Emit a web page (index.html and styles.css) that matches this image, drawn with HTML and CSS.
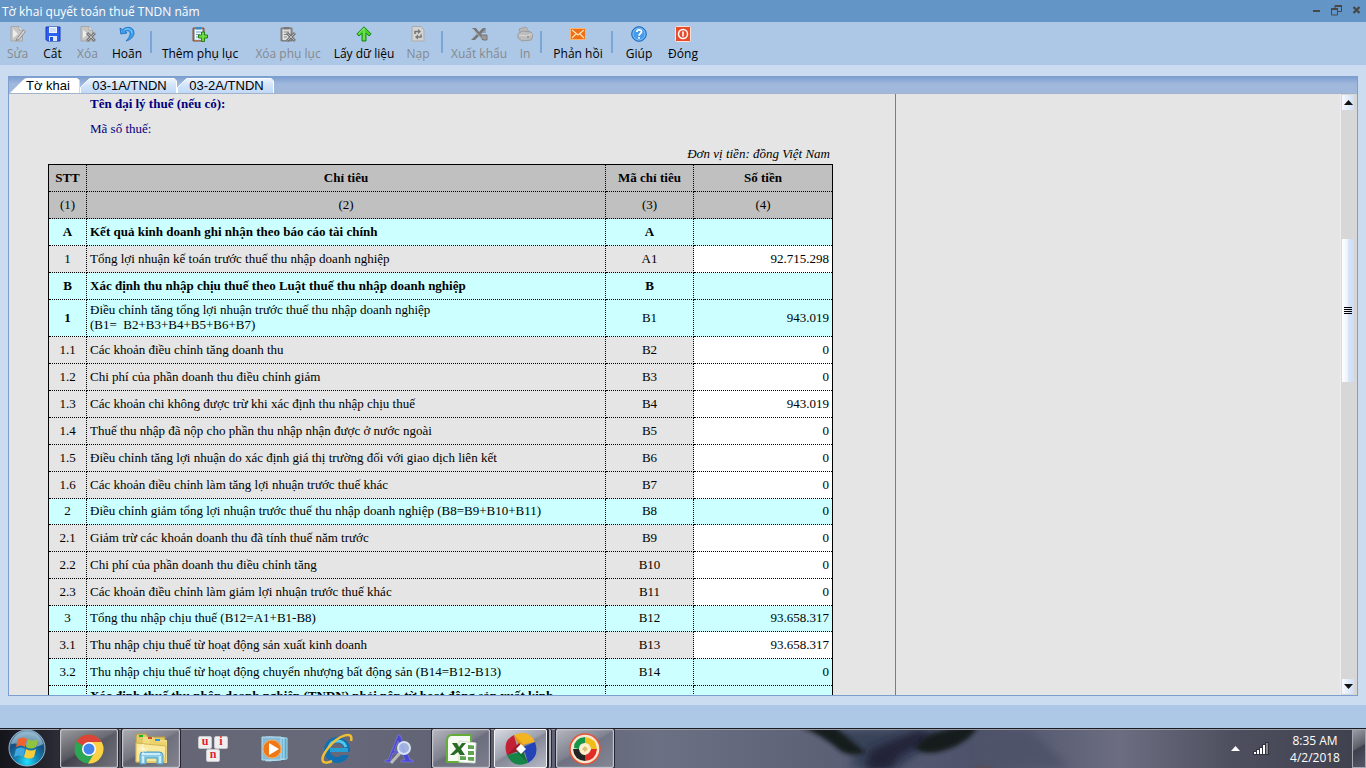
FILE: index.html
```html
<!DOCTYPE html>
<html lang="vi">
<head>
<meta charset="utf-8">
<meta name="viewport" content="width=device-width, initial-scale=1">
<title>Tờ khai quyết toán thuế TNDN năm</title>
<link rel="stylesheet" href="styles.css">
</head>
<body>
<header class="titlebar">
  <h1 class="title">Tờ khai quyết toán thuế TNDN năm</h1>
  <div class="window-controls">
    <button class="win-btn" aria-label="Thu nhỏ"><svg width="11" height="11" viewBox="0 0 11 11"><path d="M2 5h7v2H2z" fill="#484848"/></svg></button>
    <button class="win-btn" aria-label="Khôi phục"><svg width="11" height="11" viewBox="0 0 11 11"><path d="M4 3V.5h6.500v6H7M.5 4h6v6h-6z" fill="none" stroke="#484848"/><path d="M4 0h7v2H4zM0 3h7v2H0z" fill="#484848"/></svg></button>
    <button class="win-btn" aria-label="Đóng cửa sổ"><svg width="11" height="11" viewBox="0 0 11 11"><path d="M2.500 2l6 6M8.500 2l-6 6" stroke="#484848" stroke-width="2.400"/></svg></button>
  </div>
</header>

<nav class="toolbar" aria-label="Thanh công cụ">
  <button class="tool tool-s" disabled><svg width="16" height="16" viewBox="0 0 16 16"><path d="M1 .5h8L12.500 4v11H1z" fill="#c6c6c6" stroke="#a5a5a5"/><path d="M9 .5V4h3.500" fill="#eee" stroke="#aaa"/><path d="M3 3l5 5-5 4z" fill="#eee"/><path d="M7 12.500L13.500 4 15.500 5.500 9 13.500l-3 1z" fill="#d8d8d8" stroke="#8c8c8c"/></svg>Sửa</button>
  <button class="tool tool-s"><svg width="16" height="16" viewBox="0 0 16 16"><path d="M1 1h14v14H2.500L1 13.500z" fill="#2e60ef" stroke="#1838b8"/><path d="M4 1h8v6H4z" fill="#edf3ff"/><path d="M5 3h6M5 5h6" stroke="#b5c6ec"/><path d="M4 10h8v5H4z" fill="#dbe6ff"/><path d="M5 11h3v4H5z" fill="#244fd5"/></svg>Cất</button>
  <button class="tool tool-s" disabled><svg width="16" height="16" viewBox="0 0 16 16"><path d="M1 .5h8L12.500 4v11H1z" fill="#c6c6c6" stroke="#a5a5a5"/><path d="M9 .5V4h3.500" fill="#eee" stroke="#aaa"/><path d="M3 4l5 4-5 4z" fill="#eee"/><path d="M7 7l8 8M15 7l-8 8" stroke="#777" stroke-width="3"/><path d="M7.500 7.500l7 7M14.500 7.500l-7 7" stroke="#bbb"/></svg>Xóa</button>
  <button class="tool tool-m"><svg width="16" height="16" viewBox="0 0 16 16"><path d="M1 2l.8 6L8 7 6 5.500C9 3.800 11.500 5 11 8.500c-.3 2.300-1.800 4-4 6.500 4.500-1 8-4.500 8-8C15 1.500 8.500-.8 3.500 3.700z" fill="#3b9ff0" stroke="#1769b7" stroke-width=".8"/><path d="M5.500 4C9 1.500 13 3.500 13 7.500" fill="none" stroke="#8dd2ff"/></svg>Hoãn</button>
  <span class="separator"></span>
  <button class="tool tool-xl"><svg width="16" height="16" viewBox="0 0 16 16"><path d="M1 2h11v13H1z" fill="#bd6b24" stroke="#8a512d"/><path d="M2.500 3h8v11h-8z" fill="#f5faff" stroke="#8fb2d2" stroke-width=".6"/><path d="M3.500 1h6v2.500h-6z" fill="#398ac0"/><path d="M4 6h5M4 8.500h4M4 11h3" stroke="#689cc2"/><path d="M9.500 6h3v3h3v3h-3v3.500h-3V12h-3V9h3z" fill="#6fda3e" stroke="#218219"/></svg>Thêm phụ lục</button>
  <button class="tool tool-xl" disabled><svg width="16" height="16" viewBox="0 0 16 16"><path d="M1 2h11v13H1z" fill="#888" stroke="#7a7a7a"/><path d="M2.500 3h8v11h-8z" fill="#dedede"/><path d="M3.500 1h6v2.500h-6z" fill="#777"/><path d="M4 6h5M4 8.500h4M4 11h3" stroke="#888"/><path d="M7 7l8 8M15 7l-8 8" stroke="#737373" stroke-width="3"/><path d="M7.500 7.500l7 7M14.500 7.500l-7 7" stroke="#bbb"/></svg>Xóa phụ lục</button>
  <button class="tool tool-l"><svg width="16" height="16" viewBox="0 0 16 16"><path d="M8 .8L15.200 8 13 10 10 7.300V15H6V7.300L3 10 .8 8z" fill="#43cf25" stroke="#168a1d"/><path d="M8 2v12M7.500 2.500L2.500 8" stroke="#9bed77"/></svg>Lấy dữ liệu</button>
  <button class="tool tool-m" disabled><svg width="16" height="16" viewBox="0 0 16 16"><path d="M2 .5h9L14 4v11H2z" fill="#d3d3d3" stroke="#aaa"/><path d="M5 8V5.500h4M11 8.500V11H7" fill="none" stroke="#777" stroke-width="1.600"/><path d="M8 3l3 2.500L8 8zM8 8.500v5L5 11z" fill="#777"/></svg>Nạp</button>
  <span class="separator"></span>
  <button class="tool tool-l" disabled><svg width="18" height="16" viewBox="0 0 18 16"><path d="M2 2h4l3 4 4-4h3l-5 6 5 6h-4l-3-4-4 4H1l6-6z" fill="#777"/><path d="M10 9h7v5h-4zM11 4h5M12 6h4" fill="#999" stroke="#777"/><path d="M3 3l9 10" stroke="#b5b5b5"/></svg>Xuất khẩu</button>
  <button class="tool tool-xs" disabled><svg width="16" height="16" viewBox="0 0 16 16"><path d="M2 3l7-2 3 5-8 3z" fill="#bbb" stroke="#a0a0a0"/><path d="M1 8l4-3 9 1 2 4-2 4-9 1-4-3z" fill="#bdbdbd" stroke="#999"/><path d="M2 9l8 1 5-2" fill="none" stroke="#d9d9d9"/><circle cx="11" cy="11" r="1" fill="#888"/></svg>In</button>
  <span class="separator"></span>
  <button class="tool tool-l"><svg width="16" height="16" viewBox="0 0 16 16"><path d="M.5 2.500h15v11H.5z" fill="#ed7114" stroke="#fbb475"/><path d="M2 4l6 5 6-5M2 12l4-4M14 12l-4-4" fill="none" stroke="#ffe1be" stroke-width="1.200"/></svg>Phản hồi</button>
  <span class="separator"></span>
  <button class="tool tool-m"><svg width="16" height="16" viewBox="0 0 16 16"><circle cx="8" cy="8" r="7.300" fill="#469bec" stroke="#1765b4"/><circle cx="8" cy="8" r="6" fill="none" stroke="#a2d5ff" stroke-width=".6"/><path d="M5.800 6c0-3 4.700-2.800 4.700-.2C10.500 7.500 8 7.500 8 9.700M8 11v1.800" fill="none" stroke="#fff" stroke-width="1.700"/></svg>Giúp</button>
  <button class="tool tool-m"><svg width="16" height="16" viewBox="0 0 16 16"><rect x=".5" y=".5" width="15" height="15" rx="1" fill="#e54c2b" stroke="#ffe1d9"/><circle cx="8" cy="8" r="4.500" fill="none" stroke="#fff" stroke-width="1.500"/><path d="M8 5.500v5" stroke="#fff" stroke-width="1.600"/></svg>Đóng</button>
</nav>

<main class="workspace">
  <section class="panel">
    <div class="tabs" role="tablist">
      <button class="tab tab-first" role="tab" aria-selected="true"><svg class="tab-shape" viewBox="0 0 70 16" preserveAspectRatio="none"><path d="M0 16L13 2Q15 0 17 0H67L69.500 2V16z" fill="#fff"/></svg><span>Tờ khai</span></button>
      <button class="tab" role="tab" aria-selected="false"><svg class="tab-shape" viewBox="0 0 97 16" preserveAspectRatio="none"><defs><linearGradient id="tabfill" x2="0" y2="1"><stop stop-color="#eff6ff"/><stop offset=".45" stop-color="#d3e4fa"/><stop offset="1" stop-color="#c1d9f6"/></linearGradient></defs><path d="M.5 16V10L8 2Q9 .5 11 .5H94L96.500 3V16" fill="url(#tabfill)" stroke="#fff"/></svg><span>03-1A/TNDN</span></button>
      <button class="tab" role="tab" aria-selected="false"><svg class="tab-shape" viewBox="0 0 97 16" preserveAspectRatio="none"><path d="M.5 16V10L8 2Q9 .5 11 .5H94L96.500 3V16" fill="url(#tabfill)" stroke="#fff"/></svg><span>03-2A/TNDN</span></button>
    </div>
    <div class="document">
      <div class="page">
        <div class="sheet">
          <p class="agent">Tên đại lý thuế (nếu có):</p>
          <p class="taxcode">Mã số thuế:</p>
          <p class="unit">Đơn vị tiền: đồng Việt Nam</p>
          <table class="form">
            <colgroup><col class="c-no"><col><col class="c-code"><col class="c-amount"></colgroup>
            <thead>
              <tr><th>STT</th><th>Chỉ tiêu</th><th>Mã chỉ tiêu</th><th>Số tiền</th></tr>
              <tr><td>(1)</td><td>(2)</td><td>(3)</td><td>(4)</td></tr>
            </thead>
            <tbody>
              <tr class="total bold"><td>A</td><td>Kết quả kinh doanh ghi nhận theo báo cáo tài chính</td><td>A</td><td></td></tr>
              <tr><td>1</td><td>Tổng lợi nhuận kế toán trước thuế thu nhập doanh nghiệp</td><td>A1</td><td class="entry"><input aria-label="A1" value="92.715.298"></td></tr>
              <tr class="total bold"><td>B</td><td>Xác định thu nhập chịu thuế theo Luật thuế thu nhập doanh nghiệp</td><td>B</td><td></td></tr>
              <tr class="total double"><td><b>1</b></td><td>Điều chỉnh tăng tổng lợi nhuận trước thuế thu nhập doanh nghiệp<br>(B1=&nbsp; B2+B3+B4+B5+B6+B7)</td><td>B1</td><td>943.019</td></tr>
              <tr><td>1.1</td><td>Các khoản điều chỉnh tăng doanh thu</td><td>B2</td><td class="entry"><input aria-label="B2" value="0"></td></tr>
              <tr><td>1.2</td><td>Chi phí của phần doanh thu điều chỉnh giảm</td><td>B3</td><td class="entry"><input aria-label="B3" value="0"></td></tr>
              <tr><td>1.3</td><td>Các khoản chi không được trừ khi xác định thu nhập chịu thuế</td><td>B4</td><td class="entry"><input aria-label="B4" value="943.019"></td></tr>
              <tr><td>1.4</td><td>Thuế thu nhập đã nộp cho phần thu nhập nhận được ở nước ngoài</td><td>B5</td><td class="entry"><input aria-label="B5" value="0"></td></tr>
              <tr><td>1.5</td><td>Điều chỉnh tăng lợi nhuận do xác định giá thị trường đối với giao dịch liên kết</td><td>B6</td><td class="entry"><input aria-label="B6" value="0"></td></tr>
              <tr><td>1.6</td><td>Các khoản điều chỉnh làm tăng lợi nhuận trước thuế khác</td><td>B7</td><td class="entry"><input aria-label="B7" value="0"></td></tr>
              <tr class="total short"><td>2</td><td>Điều chỉnh giảm tổng lợi nhuận trước thuế thu nhập doanh nghiệp (B8=B9+B10+B11)</td><td>B8</td><td>0</td></tr>
              <tr><td>2.1</td><td>Giảm trừ các khoản doanh thu đã tính thuế năm trước</td><td>B9</td><td class="entry"><input aria-label="B9" value="0"></td></tr>
              <tr><td>2.2</td><td>Chi phí của phần doanh thu điều chỉnh tăng</td><td>B10</td><td class="entry"><input aria-label="B10" value="0"></td></tr>
              <tr><td>2.3</td><td>Các khoản điều chỉnh làm giảm lợi nhuận trước thuế khác</td><td>B11</td><td class="entry"><input aria-label="B11" value="0"></td></tr>
              <tr class="total short"><td>3</td><td>Tổng thu nhập chịu thuế (B12=A1+B1-B8)</td><td>B12</td><td>93.658.317</td></tr>
              <tr><td>3.1</td><td>Thu nhập chịu thuế từ hoạt động sản xuất kinh doanh</td><td>B13</td><td class="entry"><input aria-label="B13" value="93.658.317"></td></tr>
              <tr class="total"><td>3.2</td><td>Thu nhập chịu thuế từ hoạt động chuyển nhượng bất động sản (B14=B12-B13)</td><td>B14</td><td>0</td></tr>
              <tr class="total bold double"><td></td><td>Xác định thuế thu nhập doanh nghiệp (TNDN) phải nộp từ hoạt động sản xuất kinh<br>doanh</td><td></td><td></td></tr>
            </tbody>
          </table>
        </div>
      </div>
      <div class="scrollbar">
        <button class="scroll-btn" aria-label="Cuộn lên"><svg width="9" height="5" viewBox="0 0 9 5"><path d="M4.500 0L9 5H0z" fill="#111"/></svg></button>
        <div class="track"><div class="space-above"></div><div class="thumb"><i></i><i></i><i></i><i></i></div><div class="space-below"></div></div>
        <button class="scroll-btn" aria-label="Cuộn xuống"><svg width="9" height="5" viewBox="0 0 9 5"><path d="M0 0h9L4.500 5z" fill="#111"/></svg></button>
      </div>
    </div>
  </section>
</main>
<div class="statusbar"></div>

<footer class="taskbar">
  <svg class="wallpaper" viewBox="0 0 1366 38" preserveAspectRatio="none" aria-hidden="true">
    <defs><linearGradient id="wall"><stop stop-color="#15161c"/><stop offset=".035" stop-color="#25262f"/><stop offset=".08" stop-color="#4b4c57"/><stop offset=".13" stop-color="#656675"/><stop offset=".25" stop-color="#67697a"/><stop offset=".38" stop-color="#5c5f70"/><stop offset=".48" stop-color="#6c7083"/><stop offset=".58" stop-color="#606479"/><stop offset=".72" stop-color="#4c526a"/><stop offset=".82" stop-color="#6c6d81"/><stop offset=".9" stop-color="#4f505f"/><stop offset="1" stop-color="#3e404e"/></linearGradient><filter id="soft" x="-20%" y="-50%" width="140%" height="200%"><feGaussianBlur stdDeviation="4"/></filter><filter id="edge" x="-20%" y="-50%" width="140%" height="200%"><feGaussianBlur stdDeviation="2"/></filter></defs>
    <path d="M0 0h1366v38H0z" fill="url(#wall)"/>
    <path d="M825 0H950L920 22 900 38H850L855 22z" fill="#394359" filter="url(#soft)"/>
    <path d="M870 20L920 0 935 8 900 25 890 40H865z" fill="#202238" filter="url(#soft)"/>
    <path d="M801-3H835L865 22Q855 27 842 22 824 6 801-3zM915 17Q930-3 978-4C970 15 932 29 918 20z" fill="#191a1e" filter="url(#edge)"/>
    <path d="M980 0H1030L1070 38H980z" fill="#505369" filter="url(#soft)"/>
    <ellipse cx="983" cy="39" rx="11" ry="3" fill="#594d51" filter="url(#edge)"/>
  </svg>
  <button class="start" aria-label="Bắt đầu"><svg width="38" height="38" viewBox="0 0 38 38"><defs><radialGradient id="orb" cx=".5" cy=".88" r=".8"><stop stop-color="#20e5ff"/><stop offset=".35" stop-color="#1688b8"/><stop offset=".75" stop-color="#164d7d"/><stop offset="1" stop-color="#608baa"/></radialGradient></defs><circle cx="19" cy="19" r="18" fill="url(#orb)" stroke="#9ab9ce"/><path d="M3 15C8-2 31-2 35 15 25 22 12 12 3 15z" fill="#bddaea" opacity=".55"/><path d="M10 10q5-3 9 0l-2 8q-4-3-9 0z" fill="#ef6532"/><path d="M20 10q5 3 10 0l-2 8q-5 3-10 0z" fill="#91c43e"/><path d="M8 20q5-3 9 0l-2 8q-4-3-9 0z" fill="#43a7df"/><path d="M18 20q5 3 10 0l-2 8q-5 3-10 0z" fill="#f8cc3b"/></svg></button>
  <div class="apps">
    <button class="app running" aria-label="Chrome"><svg width="30" height="30" viewBox="0 0 30 30"><circle cx="15" cy="15" r="14.500" fill="#2ca653"/><path d="M15 15L2.400 7.800A14.500 14.500 0 0 1 27.600 8H15z" fill="#dc4437"/><path d="M15 8h12.600A14.500 14.500 0 0 1 14 29.500L21 18z" fill="#fdd045"/><circle cx="15" cy="15" r="7" fill="#fff"/><circle cx="15" cy="15" r="5.500" fill="#4385ed"/></svg></button>
    <button class="app running" aria-label="Thư mục"><svg width="34" height="32" viewBox="0 0 34 32"><path d="M2 3l1-2h9l2 3h17v25H2z" fill="#e1c969" stroke="#b59a3d"/><path d="M9 4h10l2 3h12v23H9z" fill="#f2dc83"/><path d="M16 6h8l2 3h6v20H14z" fill="#eed36a"/><path d="M2 10l30 3-1 16H2z" fill="#f8e99c" stroke="#d3b653"/><path d="M5 2h4v2H5z" fill="#10b832"/><path d="M14 4h4v2h-4z" fill="#d34931"/><path d="M21 6h5v2h-5z" fill="#2799e4"/><path d="M6 31v-9q0-3 3-3h16q4 0 4 3v9h-6v-6H12v6z" fill="#8bcbe5" stroke="#4c9cc5"/><path d="M8 21h18M9 23v7M26 23v7" stroke="#caedf8" stroke-width="2"/><path d="M9 11v10M4 16h10M6 13l6 6" stroke="#fff" opacity=".7"/></svg></button>
    <button class="app" aria-label="UniKey"><span class="keys"><span>u</span><span>i</span><span>n</span></span></button>
    <button class="app" aria-label="Media Player"><svg width="28" height="28" viewBox="0 0 28 28"><path d="M8 2l18 1v21l-18 2z" fill="#5ca4c9" stroke="#a7dced"/><path d="M5 2l18 1v21l-18 2z" fill="#79b8d5" stroke="#b6e4f1"/><path d="M1 2h19v23H1z" fill="#84bcda" stroke="#b8deee"/><circle cx="11" cy="14" r="9" fill="#f07917" stroke="#ffac54"/><path d="M8 8l10 6-10 6z" fill="#fff"/></svg></button>
    <button class="app" aria-label="Internet Explorer"><svg width="34" height="32" viewBox="0 0 34 32"><circle cx="17" cy="17" r="10" fill="none" stroke="#126faf" stroke-width="6"/><path d="M9 14C12 6 23 6 26 14" fill="none" stroke="#50c8ee" stroke-width="3"/><path d="M10 17h18" fill="none" stroke="#25a0d7" stroke-width="4"/><path d="M20 19h11v3H20z" fill="#66697b"/><path d="M31 8C34-3 19 2 9 14S1 33 12 28" fill="none" stroke="#eebf35" stroke-width="2.500"/></svg></button>
    <button class="app" aria-label="Tìm phông chữ"><svg width="30" height="32" viewBox="0 0 30 32"><path d="M1 29h8v-2H6l3-7h9l3 7h-4v2h12v-2h-3L16 2h-2L4 27H1zm9-11l4-10 4 10z" fill="#4947d5" stroke="#8684e7" stroke-width=".6"/><path d="M16 20l-9 10" stroke="#bbb" stroke-width="3"/><circle cx="20" cy="15" r="6" fill="#b2c7ed" fill-opacity=".8" stroke="#d7e2f3" stroke-width="2"/></svg></button>
    <button class="app running" aria-label="Excel"><svg width="32" height="32" viewBox="0 0 32 32"><path d="M7 2h19v27H2V8q0-6 5-6z" fill="#f5faf2" stroke="#64ad39" stroke-width="2"/><path d="M14 8l17 2-1 20-16-1z" fill="#fff" stroke="#d3e2cc"/><path d="M23 12l6 .5v3.500h-6zM23 18h6v4h-6zM15 23l6 .5V27h-6zM23 24h6v4l-6-.5z" fill="#61a551"/><path d="M7 10h5l2 4 3-4h4l-5 6 4 6h-5l-2-3-4 3H5l6-6z" fill="#276b24"/></svg></button>
    <button class="app running active" aria-label="Phần mềm kế toán"><svg width="34" height="34" viewBox="0 0 34 34"><path d="M10 3Q25-3 31 10L17 13z" fill="#f2b421"/><path d="M31 10q5 14-7 21l-4-14z" fill="#2443b6"/><path d="M24 31Q9 37 3 23l14-3z" fill="#168447"/><path d="M3 23Q-2 9 10 3l4 15z" fill="#c32135"/><path d="M10 3L22 15 17 20z" fill="#d9961c"/><path d="M31 10L19 22 14 17z" fill="#2443b6"/><path d="M24 31L12 19 17 14z" fill="#116d3a"/><path d="M3 23L15 11 20 17z" fill="#9c1a2b"/><path d="M17 12l5 5-5 5-5-5z" fill="#fff"/></svg></button>
    <button class="app running" aria-label="Hỗ trợ kê khai"><svg width="34" height="34" viewBox="0 0 34 34"><circle cx="17" cy="17" r="15" fill="#f5ead1" stroke="#e75336" stroke-width="1.500"/><path d="M6 16q0-10 11-11v6q-6 0-6 6z" fill="#15954a"/><path d="M17 5q11 1 12 12h-6q-1-6-6-6z" fill="#f0bd18"/><path d="M29 17q-1 11-12 12v-6q5-1 6-6z" fill="#e22c27"/><path d="M17 29Q6 28 5 17h6q1 6 6 6z" fill="#252425"/><path d="M17 11l6 6-6 6-6-6z" fill="#fff1ca"/><path d="M17 14l3 3-3 3-3-3z" fill="#dfbd74"/></svg></button>
  </div>
  <div class="tray">
    <svg width="9" height="6" viewBox="0 0 9 6"><path d="M4.500 0L9 5H0z" fill="#fff"/></svg>
    <svg width="16" height="14" viewBox="0 0 16 14"><path d="M0 9h3V7h3V5h3V2h3V0h4v13H0z" fill="#303240"/><path d="M1 10h2v2H1zM4 8h2v4H4zM7 6h2v6H7zM10 3h2v9h-2z" fill="#fff"/><path d="M13 1h2v11h-2z" fill="#85868d"/></svg>
    <div class="clock"><span>8:35 AM</span><span>4/2/2018</span></div>
  </div>
  <button class="show-desktop" aria-label="Hiện màn hình nền"></button>
</footer>
</body>
</html>
```

FILE: styles.css
```css
* { box-sizing: border-box; }
html { height: 100%; }
body {
  display: flex;
  flex-direction: column;
  height: 100%;
  margin: 0;
  overflow: hidden;
  background: #cbdcf1;
  font-family: "Open Sans", "Noto Sans", sans-serif;
  font-size: 12px;
}
button { margin: 0; padding: 0; border: 0; background: none; font: inherit; color: inherit; }
p { margin: 0; }

.titlebar {
  display: flex;
  flex: none;
  align-items: center;
  justify-content: space-between;
  height: 22px;
  padding: 0 4px 0 2px;
  background: #6495c7;
  color: #fff;
}
.title { margin: 0; font-size: 12px; font-weight: 400; }
.window-controls { display: flex; gap: 9px; padding-bottom: 2px; }
.win-btn { display: flex; }

.toolbar {
  display: flex;
  flex: none;
  height: 43px;
  background: #adc8e6;
  color: #000;
}
.tool {
  display: flex;
  flex: none;
  flex-direction: column;
  align-items: center;
  gap: 3px;
  padding-top: 4px;
  line-height: 18px;
  white-space: nowrap;
}
.tool:disabled { color: #85898e; }
.tool svg { flex: none; }
.tool-xs { width: 28px; }
.tool-s { width: 35px; }
.tool-m { width: 44px; }
.tool-l { width: 64px; }
.tool-xl { width: 88px; }
.separator {
  flex: none;
  width: 2px;
  height: 22px;
  margin: 9px 4px 0 1px;
  background: #7aa6d5;
}

.workspace { display: flex; flex: 1; min-height: 0; padding: 11px 8px 9px; }
.panel {
  display: flex;
  flex: 1;
  flex-direction: column;
  min-width: 0;
  border: 1px solid #7c9fcf;
  background: #e5e5e5;
}
.tabs {
  display: flex;
  flex: none;
  align-items: flex-end;
  height: 16px;
  padding-left: 1px;
  background: linear-gradient(#7c9fd0, #a1b8dd 7px);
}
.tab {
  position: relative;
  width: 97px;
  height: 15px;
  padding-left: 2px;
  font: 13px/15px "Liberation Sans", Arial, sans-serif;
  color: #000;
}
.tab-first { width: 70px; padding-left: 6px; }
.tab span { position: relative; }
.tab-shape { position: absolute; inset: 0; width: 100%; height: 100%; }

.document { display: flex; flex: 1; min-height: 0; border-top: 1px solid #a1b4cb; }
.page { flex: 1; min-width: 0; overflow: hidden; }
.sheet {
  width: 887px;
  min-height: 100%;
  padding: 0 62px 0 39px;
  border-right: 1px solid #7d7d7d;
  font: 13px/15px "Liberation Serif", "Times New Roman", serif;
}
.agent, .taxcode { padding-left: 42px; color: #000080; }
.agent { font-weight: 700; line-height: 20px; }
.taxcode { line-height: 30px; }
.unit { padding-right: 3px; text-align: right; font-style: italic; line-height: 20px; }

.form {
  width: 100%;
  table-layout: fixed;
  border-collapse: collapse;
  border: 1px solid #000;
}
.c-no { width: 38px; }
.c-code { width: 88px; }
.c-amount { width: 139px; }
.form thead { background: #c0c0c0; }
.form tr { height: 27px; }
.form th, .form td { padding: 0 3px 2px; border: 1px dotted #000; text-align: center; }
.form tbody td:nth-child(2) { text-align: left; }
.form tbody td:last-child { text-align: right; }
.form .total { background: #ccffff; }
.form .bold { font-weight: 700; }
.form .short { height: 26px; }
.form .double { height: 37px; }
.form .entry { background: #fff; }
.entry input {
  display: block;
  width: 100%;
  padding: 0;
  border: 0;
  background: transparent;
  font: inherit;
  text-align: right;
}

.scrollbar {
  display: flex;
  flex: none;
  flex-direction: column;
  width: 17px;
  padding: 1px 3px 1px 1px;
  border-left: 1px solid #eee;
  background: #d7d7d7;
}
.scroll-btn {
  display: flex;
  flex: none;
  align-items: center;
  justify-content: center;
  height: 15px;
  background: linear-gradient(90deg, #f7faff, #cfdef5);
}
.track { display: flex; flex: 1; flex-direction: column; }
.space-above { flex: 129; }
.space-below { flex: 297; }
.thumb {
  display: flex;
  flex: 143;
  flex-direction: column;
  align-items: center;
  justify-content: center;
  gap: 1px;
  background: linear-gradient(90deg, #fff, #eef3fd 45%, #d9e6f6 50%, #cdddf5);
}
.thumb i { width: 8px; height: 1px; background: #000; }

.statusbar { flex: none; height: 23px; background: #adc8e6; }

.taskbar {
  position: relative;
  display: flex;
  flex: none;
  height: 40px;
  border-top: 1px solid #191b25;
  color: #fff;
}
.wallpaper { position: absolute; inset: 0; width: 100%; height: 100%; border-top: 1px solid #9b9ca6; }
.start { position: relative; width: 38px; margin-left: 8px; }
.apps { position: relative; display: flex; gap: 4px; margin-left: 14px; }
.app { display: flex; align-items: center; justify-content: center; width: 58px; height: 39px; }
.app svg { flex: none; }
.running {
  border: 1px solid #c2c3cb;
  border-radius: 2px;
  background: linear-gradient(150deg, #ffffff85, #ffffff30 45%, #ffffff15 50%, #ffffff30);
  box-shadow: inset 0 0 1px #fff, 0 0 0 1px #252631;
}
.active {
  width: 53px;
  margin-right: 5px;
  background: linear-gradient(150deg, #d8dbe2, #9da1ae 45%, #858997 50%, #b5b9c6);
  border-color: #f3f3f5;
  box-shadow: 1px 0 0 1px #252631, 4px 0 0 0 #aaaeb9, 5px 0 0 0 #252631;
}
.keys { display: grid; grid-template-columns: 14px 14px; gap: 0 2px; justify-content: center; }
.keys span {
  height: 13px;
  border: 1px solid #c9c9cd;
  border-radius: 2px;
  background: #efeff1;
  color: #e02227;
  font: bold 12px/9px "Liberation Serif", serif;
  text-align: center;
}
.keys span:last-child { grid-column: 1 / 3; width: 14px; justify-self: center; }
.tray { position: relative; display: flex; align-items: center; gap: 13px; margin-left: auto; }
.clock { display: flex; flex-direction: column; width: 66px; text-align: center; line-height: 17px; }
.show-desktop {
  position: relative;
  width: 14px;
  border: 1px solid #a6a8b0;
  margin-left: 4px;
  background: linear-gradient(150deg, #9a9ca5, #5d5f69 45%, #3d404e 50%, #555767);
}
```
